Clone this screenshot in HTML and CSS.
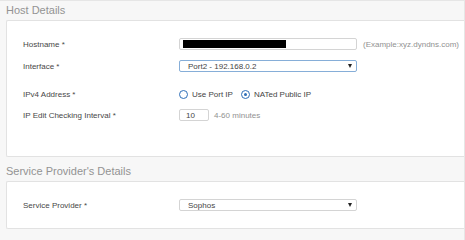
FILE: index.html
```html
<!DOCTYPE html>
<html>
<head>
<meta charset="utf-8">
<link rel="stylesheet" href="styles.css">
</head>
<body>
<div class="page">
  <div class="section-title">Host Details</div>
  <div class="card card-host">
    <div class="row row-host">
      <div class="label">Hostname *</div>
      <div class="field">
        <div class="input input-wide"><span class="redact"></span></div>
        <span class="hint">(Example:xyz.dyndns.com)</span>
      </div>
    </div>
    <div class="row row-iface">
      <div class="label">Interface *</div>
      <div class="field">
        <div class="select select-focus"><span>Port2 - 192.168.0.2</span><span class="arrow"></span></div>
      </div>
    </div>
    <div class="row row-ipv4">
      <div class="label">IPv4 Address *</div>
      <div class="field">
        <span class="radio"></span><span class="radio-label">Use Port IP</span>
        <span class="radio radio-on"></span><span class="radio-label">NATed Public IP</span>
      </div>
    </div>
    <div class="row row-interval">
      <div class="label">IP Edit Checking Interval *</div>
      <div class="field">
        <div class="input input-small">10</div>
        <span class="hint hint-min">4-60 minutes</span>
      </div>
    </div>
  </div>
  <div class="section-title section-title-2">Service Provider's Details</div>
  <div class="card card-sp">
    <div class="row">
      <div class="label">Service Provider *</div>
      <div class="field">
        <div class="select"><span>Sophos</span><span class="arrow"></span></div>
      </div>
    </div>
  </div>
</div>
</body>
</html>
```
FILE: styles.css
```css
html, body {
  margin: 0;
  padding: 0;
}
body {
  background: #f7f7f7;
  font-family: "Liberation Sans", Arial, sans-serif;
  font-size: 8px;
  color: #444;
  width: 465px;
  height: 240px;
  overflow: hidden;
}
.page {
  border-top: 1px solid #e6e6e6;
  border-right: 1px solid #e6e6e6;
  height: 239px;
}
.section-title {
  height: 19px;
  line-height: 18px;
  padding-left: 6px;
  font-size: 11px;
  color: #939393;
}
.section-title-2 {
  height: 24px;
  line-height: 28px;
}
.card {
  margin-left: 6px;
  background: #fff;
  border: 1px solid #e2e2e2;
  border-right: none;
  border-radius: 2px 0 0 2px;
  padding-left: 16px;
}
.card-host {
  padding-top: 17px;
  height: 118px;
}
.card-sp {
  padding-top: 17px;
  height: 29px;
}
.row {
  display: grid;
  grid-template-columns: 156px 1fr;
  align-items: center;
  height: 12px;
}
.row-iface { margin-top: 10px; }
.row-ipv4 { margin-top: 16px; }
.row-interval { margin-top: 9px; }
.label {
  color: #474747;
}
.field {
  display: flex;
  align-items: center;
}
.input, .select {
  box-sizing: border-box;
  height: 12px;
  border: 1px solid #d4d4d4;
  border-radius: 2px;
  background: #fff;
  display: flex;
  align-items: center;
  padding-left: 3px;
  color: #444;
}
.input-wide {
  width: 178px;
}
.redact {
  display: block;
  width: 103px;
  height: 8px;
  background: #000;
}
.input-small {
  width: 30px;
  padding-left: 6px;
}
.hint {
  margin-left: 6px;
  color: #919191;
}
.hint-min {
  margin-left: 5px;
}
.select {
  width: 178px;
  padding-left: 8px;
  justify-content: space-between;
  padding-right: 4px;
}
.select-focus {
  border-color: #86aed8;
}
.arrow {
  width: 0;
  height: 0;
  border-left: 2px solid transparent;
  border-right: 2px solid transparent;
  border-top: 4px solid #222;
}
.radio {
  box-sizing: border-box;
  width: 9px;
  height: 9px;
  border: 1.5px solid #2f6fb8;
  border-radius: 50%;
  display: inline-flex;
  align-items: center;
  justify-content: center;
}
.radio-on::after {
  content: "";
  width: 3px;
  height: 3px;
  border-radius: 50%;
  background: #2f6fb8;
}
.radio-label {
  margin-left: 4px;
  margin-right: 8px;
  color: #444;
}
```
